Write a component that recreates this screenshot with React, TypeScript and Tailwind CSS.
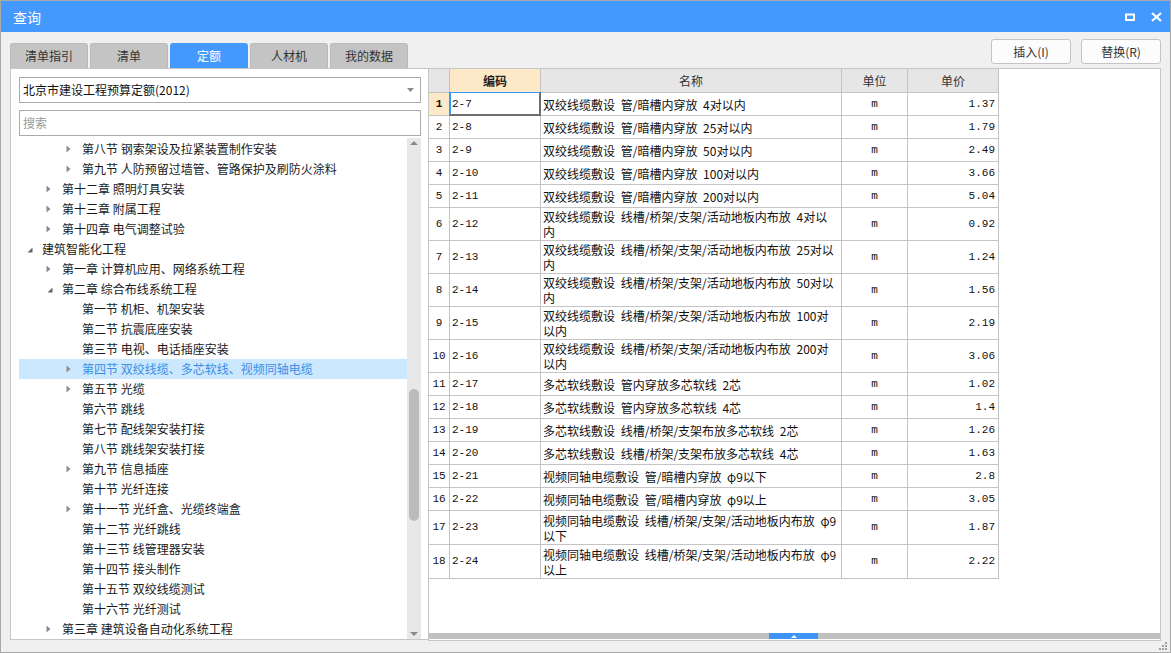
import React from 'react';

type TreeNode = { l: number; a?: 'c' | 'e'; t: string; sel?: boolean };

const tree: TreeNode[] = [
  { l: 2, a: 'c', t: '第八节 钢索架设及拉紧装置制作安装' },
  { l: 2, a: 'c', t: '第九节 人防预留过墙管、管路保护及刷防火涂料' },
  { l: 1, a: 'c', t: '第十二章 照明灯具安装' },
  { l: 1, a: 'c', t: '第十三章 附属工程' },
  { l: 1, a: 'c', t: '第十四章 电气调整试验' },
  { l: 0, a: 'e', t: '建筑智能化工程' },
  { l: 1, a: 'c', t: '第一章 计算机应用、网络系统工程' },
  { l: 1, a: 'e', t: '第二章 综合布线系统工程' },
  { l: 2, t: '第一节 机柜、机架安装' },
  { l: 2, t: '第二节 抗震底座安装' },
  { l: 2, t: '第三节 电视、电话插座安装' },
  { l: 2, a: 'c', t: '第四节 双绞线缆、多芯软线、视频同轴电缆', sel: true },
  { l: 2, a: 'c', t: '第五节 光缆' },
  { l: 2, t: '第六节 跳线' },
  { l: 2, t: '第七节 配线架安装打接' },
  { l: 2, t: '第八节 跳线架安装打接' },
  { l: 2, a: 'c', t: '第九节 信息插座' },
  { l: 2, t: '第十节 光纤连接' },
  { l: 2, a: 'c', t: '第十一节 光纤盒、光缆终端盒' },
  { l: 2, t: '第十二节 光纤跳线' },
  { l: 2, t: '第十三节 线管理器安装' },
  { l: 2, t: '第十四节 接头制作' },
  { l: 2, t: '第十五节 双绞线缆测试' },
  { l: 2, t: '第十六节 光纤测试' },
  { l: 1, a: 'c', t: '第三章 建筑设备自动化系统工程' },
];

type Row = { code: string; name: string[]; price: string; h: number };

const sj = '双绞线缆敷设 ';
const dx = '多芯软线敷设 ';
const sp = '视频同轴电缆敷设 ';
const rows: Row[] = [
  { code: '2-7', name: [sj + '管/暗槽内穿放 4对以内'], price: '1.37', h: 23 },
  { code: '2-8', name: [sj + '管/暗槽内穿放 25对以内'], price: '1.79', h: 23 },
  { code: '2-9', name: [sj + '管/暗槽内穿放 50对以内'], price: '2.49', h: 23 },
  { code: '2-10', name: [sj + '管/暗槽内穿放 100对以内'], price: '3.66', h: 23 },
  { code: '2-11', name: [sj + '管/暗槽内穿放 200对以内'], price: '5.04', h: 23 },
  { code: '2-12', name: [sj + '线槽/桥架/支架/活动地板内布放 4对以', '内'], price: '0.92', h: 33 },
  { code: '2-13', name: [sj + '线槽/桥架/支架/活动地板内布放 25对以', '内'], price: '1.24', h: 33 },
  { code: '2-14', name: [sj + '线槽/桥架/支架/活动地板内布放 50对以', '内'], price: '1.56', h: 33 },
  { code: '2-15', name: [sj + '线槽/桥架/支架/活动地板内布放 100对', '以内'], price: '2.19', h: 33 },
  { code: '2-16', name: [sj + '线槽/桥架/支架/活动地板内布放 200对', '以内'], price: '3.06', h: 33 },
  { code: '2-17', name: [dx + '管内穿放多芯软线 2芯'], price: '1.02', h: 23 },
  { code: '2-18', name: [dx + '管内穿放多芯软线 4芯'], price: '1.4', h: 23 },
  { code: '2-19', name: [dx + '线槽/桥架/支架布放多芯软线 2芯'], price: '1.26', h: 23 },
  { code: '2-20', name: [dx + '线槽/桥架/支架布放多芯软线 4芯'], price: '1.63', h: 23 },
  { code: '2-21', name: [sp + '管/暗槽内穿放 φ9以下'], price: '2.8', h: 23 },
  { code: '2-22', name: [sp + '管/暗槽内穿放 φ9以上'], price: '3.05', h: 23 },
  { code: '2-23', name: [sp + '线槽/桥架/支架/活动地板内布放 φ9', '以下'], price: '1.87', h: 34 },
  { code: '2-24', name: [sp + '线槽/桥架/支架/活动地板内布放 φ9', '以上'], price: '2.22', h: 34 },
];

const tabs = ['清单指引', '清单', '定额', '人材机', '我的数据'];

function Arrow({ kind }: { kind?: 'c' | 'e' }) {
  if (kind === 'c')
    return (
      <svg width="5" height="8" viewBox="0 0 5 8" className="ml-[7px]">
        <path d="M0.5 0.5 L4.5 4 L0.5 7.5 Z" fill="#8c8c8c" />
      </svg>
    );
  if (kind === 'e')
    return (
      <svg width="6" height="6" viewBox="0 0 6 6" className="ml-[8px] mt-[2px]">
        <path d="M5.5 0.5 L5.5 5.5 L0.5 5.5 Z" fill="#666666" />
      </svg>
    );
  return null;
}

export default function App() {
  return (
    <div className="w-[1171px] h-[653px] flex flex-col bg-[#f0f0f0] border border-[#a9a9a9] font-['Noto_Sans_CJK_SC',sans-serif] text-[#222] overflow-hidden">
      {/* title bar */}
      <div className="h-[31px] shrink-0 bg-[#4499fe] flex items-center justify-between pl-[12px] pr-[8px]">
        <span className="text-white text-[14px] leading-none">查询</span>
        <div className="flex items-center gap-[16px]">
          <svg width="10" height="8" viewBox="0 0 10 8">
            <rect x="1" y="1.5" width="8" height="5.5" fill="none" stroke="#fff" strokeWidth="2" />
          </svg>
          <svg width="11" height="10" viewBox="0 0 11 10">
            <path d="M1 1 L10 9 M10 1 L1 9" stroke="#fff" strokeWidth="2.2" />
          </svg>
        </div>
      </div>

      {/* tabs + buttons */}
      <div className="h-[36px] shrink-0 flex justify-between pl-[9px] pr-[9px]">
        <div className="flex items-end gap-[2px]">
          {tabs.map((t) => (
            <div
              key={t}
              className={
                t === '定额'
                  ? 'w-[78px] h-[25px] rounded-t-[3px] bg-[#4499fe] text-white text-[12px] flex items-center justify-center'
                  : 'w-[78px] h-[25px] rounded-t-[3px] bg-[#c4c4c4] border border-b-0 border-[#bababa] text-[#333] text-[12px] flex items-center justify-center'
              }
            >
              {t}
            </div>
          ))}
        </div>
        <div className="flex gap-[10px] pt-[7px]">
          <button className="w-[80px] h-[25px] bg-[#fcfcfc] border border-[#c4c4c4] rounded-[3px] text-[12px] text-[#333]">插入(I)</button>
          <button className="w-[80px] h-[25px] bg-[#fcfcfc] border border-[#c4c4c4] rounded-[3px] text-[12px] text-[#333]">替换(R)</button>
        </div>
      </div>

      {/* main */}
      <div className="flex-1 flex pl-[9px] pr-[9px] pb-[12px]">
        {/* left panel */}
        <div className="w-[418px] shrink-0 mb-[1px] bg-white border-l border-t border-b border-[#c6c6c6] flex flex-col">
          <div className="ml-[8px] mt-[8px] w-[402px] h-[26px] border border-[#ababab] flex items-center justify-between pl-[3px] pr-[6px]">
            <span className="text-[12px] text-[#111]">北京市建设工程预算定额(2012)</span>
            <svg width="7" height="4" viewBox="0 0 7 4">
              <path d="M0 0 L7 0 L3.5 4 Z" fill="#8a8a8a" />
            </svg>
          </div>
          <div className="ml-[8px] mt-[7px] w-[402px] h-[26px] border border-[#ababab] flex items-center pl-[3px]">
            <span className="text-[12px] text-[#9a9a9a]">搜索</span>
          </div>
          <div className="mt-[2px] flex-1 flex min-h-0 w-[410px]">
            <div className="flex-1 overflow-hidden pl-[8px] pt-[1px]">
              {tree.map((n, i) => (
                <div
                  key={i}
                  className={
                    n.sel
                      ? 'h-[20px] flex items-center bg-[#cce8ff] text-[#3a8ee6] text-[12px] whitespace-nowrap'
                      : 'h-[20px] flex items-center text-[#1a1a1a] text-[12px] whitespace-nowrap'
                  }
                >
                  <div className="shrink-0" style={{ width: n.l * 20 }} />
                  <div className="w-[23px] shrink-0 flex items-center">
                    <Arrow kind={n.a} />
                  </div>
                  <span>{n.t}</span>
                </div>
              ))}
            </div>
            {/* vertical scrollbar */}
            <div className="w-[14px] shrink-0 bg-[#e8e8e8] relative">
              <svg width="8" height="4" viewBox="0 0 8 4" className="absolute left-[3px] top-[3px]">
                <path d="M0 4 L4 0 L8 4 Z" fill="#8a8a8a" />
              </svg>
              <div className="absolute left-[2px] w-[10px] top-[251px] h-[132px] rounded-full bg-[#bcbcbc]" />
              <svg width="8" height="4" viewBox="0 0 8 4" className="absolute left-[3px] bottom-[3px]">
                <path d="M0 0 L8 0 L4 4 Z" fill="#8a8a8a" />
              </svg>
            </div>
          </div>
        </div>

        {/* grid panel */}
        <div className="flex-1 bg-white border border-[#c6c6c6] flex flex-col">
          <div className="w-[570px] font-['Liberation_Mono',monospace] text-[11px] text-[#111]">
            <div className="flex h-[24px] border-b border-[#c4c4c4] font-['Noto_Sans_CJK_SC',sans-serif] text-[12px] text-[#333]">
              <div className="w-[21px] border-r border-[#c4c4c4] bg-[#e6e6e6]" />
              <div className="w-[91px] border-r border-[#c4c4c4] bg-[#fde8c8] font-bold text-[#222] flex items-center justify-center">编码</div>
              <div className="w-[301px] border-r border-[#c4c4c4] bg-[#e6e6e6] flex items-center justify-center">名称</div>
              <div className="w-[66px] border-r border-[#c4c4c4] bg-[#e6e6e6] flex items-center justify-center">单位</div>
              <div className="w-[91px] border-r border-[#c4c4c4] bg-[#e6e6e6] flex items-center justify-center">单价</div>
            </div>
            {rows.map((r, i) => (
              <div key={r.code} className="flex border-b border-[#c4c4c4]" style={{ height: r.h }}>
                <div
                  className={
                    i === 0
                      ? 'w-[21px] border-r border-[#c4c4c4] bg-[#fde8c8] font-bold flex items-center justify-center'
                      : 'w-[21px] border-r border-[#c4c4c4] flex items-center justify-center'
                  }
                >
                  {i + 1}
                </div>
                <div className="w-[91px] border-r border-[#c4c4c4] flex items-center pl-[2px] relative">
                  {r.code}
                  {i === 0 && (
                    <div className="absolute -left-[1px] -top-[1px] -right-[1px] -bottom-[1px] border-l-2 border-t border-[#3399ff] border-r-2 border-b-2 border-r-[#6e6e6e] border-b-[#6e6e6e]" />
                  )}
                </div>
                <div className="w-[301px] border-r border-[#c4c4c4] flex flex-col justify-center pl-[2px] font-['Noto_Sans_CJK_SC',sans-serif] text-[12px] leading-[15px] [word-spacing:3px] whitespace-nowrap overflow-hidden">
                  {r.name.map((line, j) => (
                    <span key={j}>{line}</span>
                  ))}
                </div>
                <div className="w-[66px] border-r border-[#c4c4c4] flex items-center justify-center">m</div>
                <div className="w-[91px] border-r border-[#c4c4c4] flex items-center justify-end pr-[3px]">{r.price}</div>
              </div>
            ))}
          </div>
          <div className="flex-1" />
          {/* horizontal bar */}
          <div className="h-[6px] mb-[1px] bg-[#c0c0c0] flex">
            <div className="w-[340px]" />
            <div className="w-[49px] bg-[#3d94f6] flex items-center justify-center">
              <svg width="6" height="3" viewBox="0 0 6 3">
                <path d="M0 3 L3 0 L6 3 Z" fill="#fff" />
              </svg>
            </div>
          </div>
        </div>
      </div>

      {/* resize grip */}
      <div className="relative h-0">
        <svg width="9" height="9" viewBox="0 0 9 9" className="absolute right-[2px] bottom-[2px]">
          <rect x="6" y="0" width="2" height="2" fill="#a0a0a0" />
          <rect x="3" y="3" width="2" height="2" fill="#a0a0a0" />
          <rect x="6" y="3" width="2" height="2" fill="#a0a0a0" />
          <rect x="0" y="6" width="2" height="2" fill="#a0a0a0" />
          <rect x="3" y="6" width="2" height="2" fill="#a0a0a0" />
          <rect x="6" y="6" width="2" height="2" fill="#a0a0a0" />
        </svg>
      </div>
    </div>
  );
}
